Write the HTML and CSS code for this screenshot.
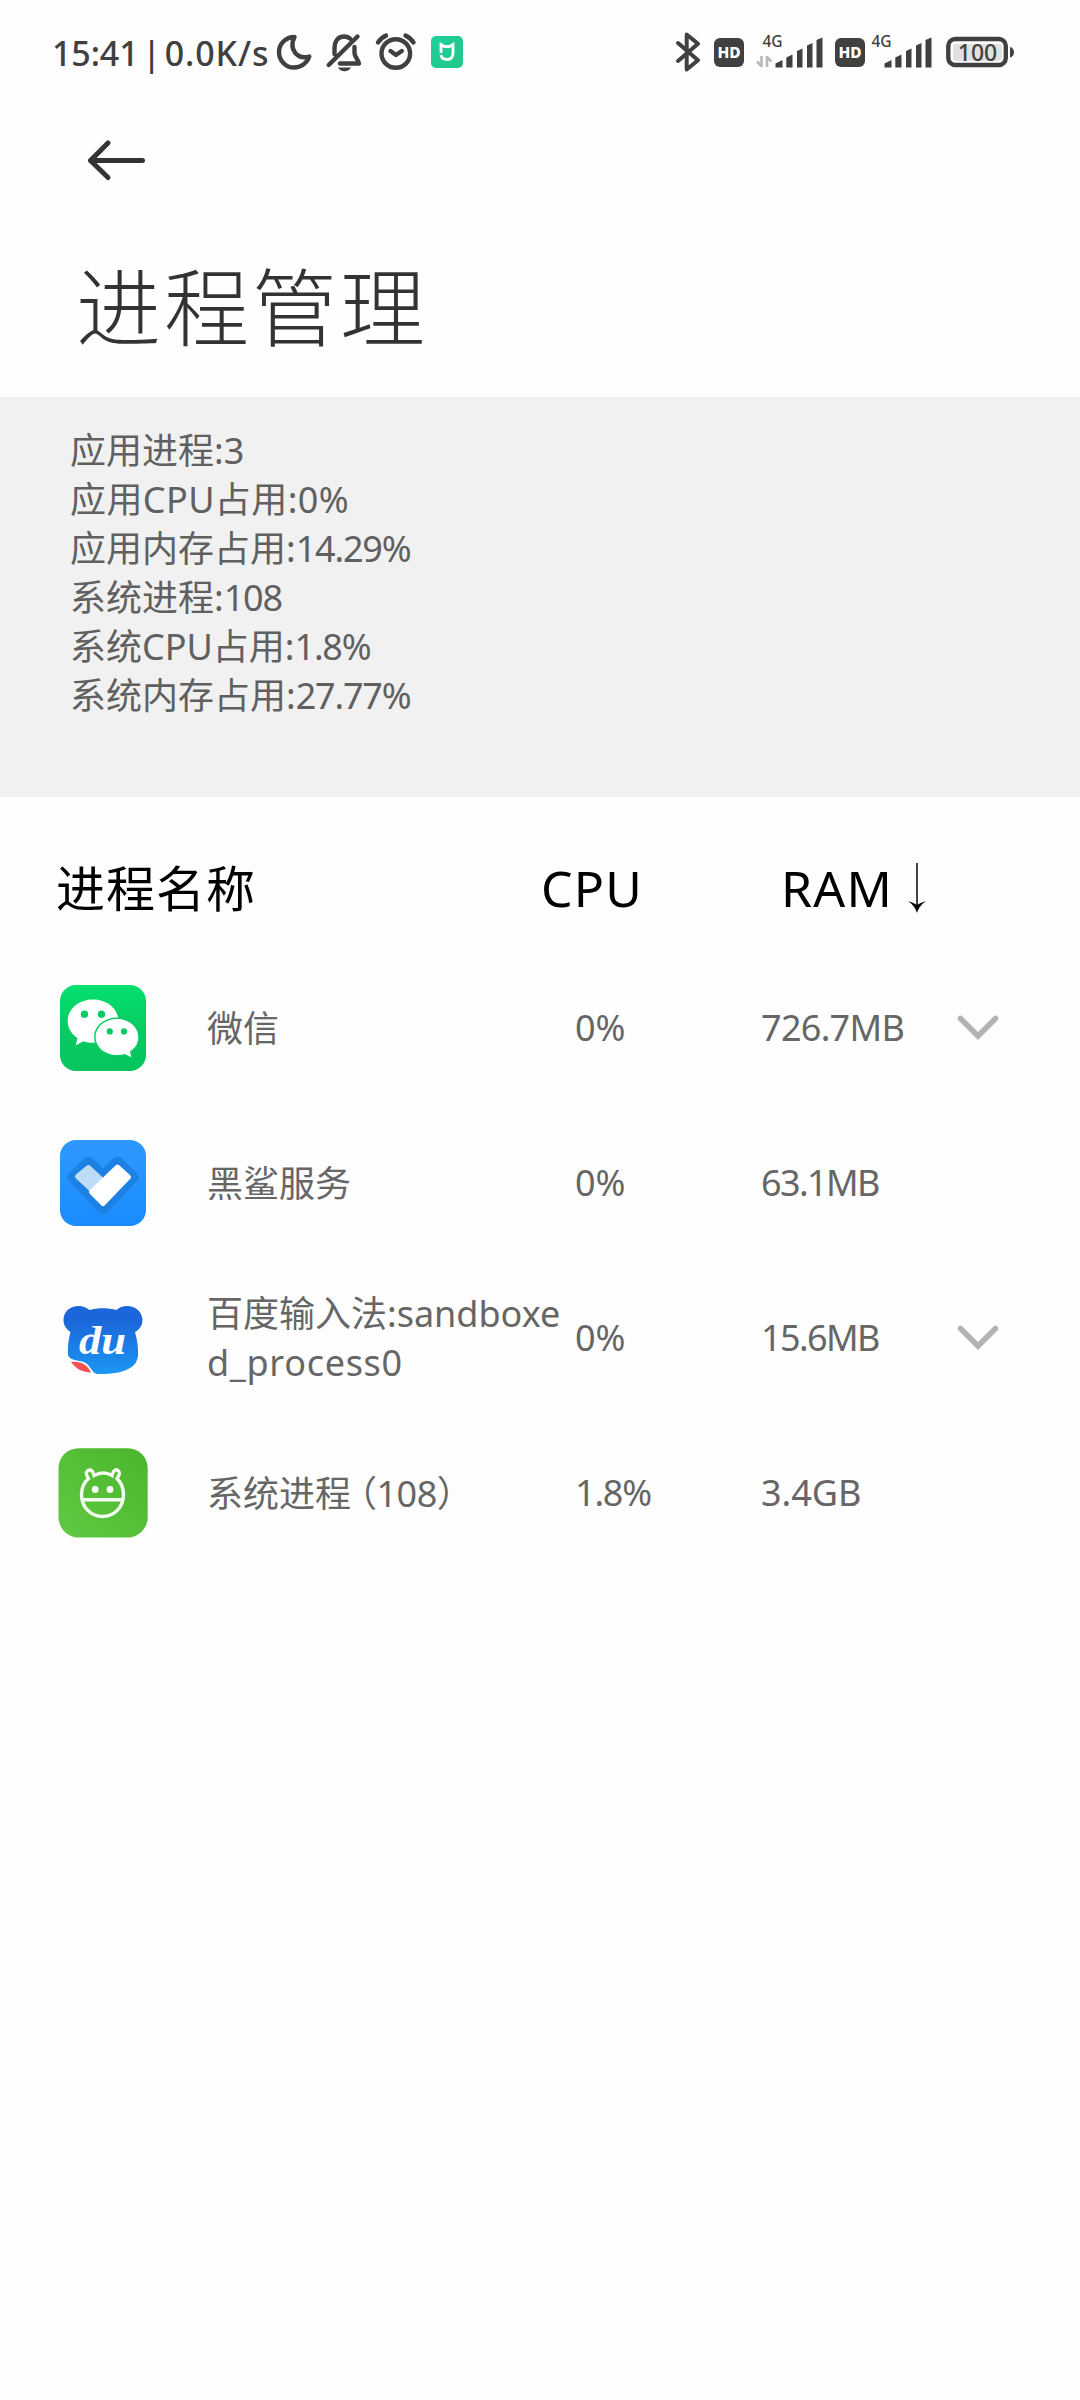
FILE: index.html
```html
<!DOCTYPE html>
<html lang="zh-CN">
<head>
<meta charset="utf-8">
<title>进程管理</title>
<link rel="stylesheet" href="styles.css">
</head>
<body>
<header class="status">
  <div class="status-left">
    <span class="clock">15:41 | <span class="speed">0.0K/s</span></span>
    <svg class="ic" width="40" height="44" viewBox="274 30 40 44"><path d="M294.500 37C288.500 49 297 60 309.300 56.500C307 63 301 67.500 294 67.500C285.500 67.500 279 60.500 279 52C279 44 285.500 37 294.500 37Z"/></svg>
    <svg class="ic" width="40" height="44" viewBox="324 30 40 44"><path d="M328.700 65L357.500 36.500M334.500 54V49C334.500 41 338 36.500 344 36.500C346.500 36.500 348.500 37.300 350 38.500M354.500 47V53C354.500 57 358 59 359 63.500H340"/><path class="solid" d="M338 67.500H351C349.500 70 347.500 71.200 344.500 71.200S339.500 70 338 67.500Z"/></svg>
    <svg class="ic" width="44" height="44" viewBox="374 30 44 44"><circle cx="395.800" cy="53.500" r="14.300"/><path d="M378 42.500C380 39.500 382.500 37 386 35.600M405.500 35.600C409 37 411.500 39.500 413.500 42.500M390.500 51L396 55L401.800 51"/></svg>
    <svg class="mi" width="32" height="32" viewBox="0 0 32 32"><defs><linearGradient id="mg" x1="0" y1="0" x2="1" y2="1"><stop offset="0" stop-color="#1cd19b"/><stop offset="1" stop-color="#22c78a"/></linearGradient></defs><rect width="32" height="32" rx="5" fill="url(#mg)"/><path d="M10 17V8.500L13.500 10.500H18.500L22 8.500V17C22 21.500 20 23.500 16 23.500C12.500 23.500 10.500 22 10 19" fill="none" stroke="#fff" stroke-width="2.800"/></svg>
  </div>
  <div class="status-right">
    <svg class="ic" width="30" height="44" viewBox="673 30 30 44"><path d="M678 43L698 60.300L686.700 69.500V34.500L698 43.700L678 61"/></svg>
    <span class="hd">HD</span>
    <svg class="signal" width="69" height="44" viewBox="756 30 69 44"><text x="762.500" y="46.500">4G</text><path class="faint" d="M761.500 56V67M757 61.500L761.500 66M767 67V56M771.500 61.500L767 57"/><path d="M775.500 67.500V63.500L782.500 60V67.500ZM786.300 67.500V57.500L792.500 54.500V67.500ZM797 67.500V51L802.500 48.500V67.500ZM807 67.500V45.500L812.500 43V67.500ZM816.500 67.500V40L822.500 37.500V67.500Z"/></svg>
    <span class="hd second">HD</span>
    <svg class="signal" width="69" height="44" viewBox="756 30 69 44"><text x="762.500" y="46.500">4G</text><path d="M775.500 67.500V63.500L782.500 60V67.500ZM786.300 67.500V57.500L792.500 54.500V67.500ZM797 67.500V51L802.500 48.500V67.500ZM807 67.500V45.500L812.500 43V67.500ZM816.500 67.500V40L822.500 37.500V67.500Z"/></svg>
    <svg class="battery" width="72" height="44" viewBox="944 30 72 44"><rect x="953" y="44" width="49" height="17" rx="3" fill="#e1e1e1"/><rect x="948.300" y="39" width="57.500" height="26" rx="7" fill="none" stroke="#404040" stroke-width="4.400"/><path d="M1010.500 47.500C1014.500 48.500 1014.500 56 1010.500 57Z" fill="#404040" stroke="#404040"/><text x="977.500" y="60.700" text-anchor="middle">100</text></svg>
  </div>
</header>

<div class="heading">
  <svg class="back" width="64" height="44" viewBox="84 138 64 44"><path d="M142.500 160.500H90.500M108 143L90.500 160.500L108 177.500"/></svg>
  <h1>进程管理</h1>
</div>

<section class="summary">
  <p>应用进程:3</p>
  <p class="wide">应用CPU占用:0%</p>
  <p>应用内存占用:<span class="tight">14.29%</span></p>
  <p>系统进程:<span class="tight">108</span></p>
  <p>系统CPU占用:<span class="tight">1.8%</span></p>
  <p>系统内存占用:<span class="tight">27.77%</span></p>
</section>

<div class="row head">
  <span class="h-name">进程名称</span>
  <span class="h-cpu">CPU</span>
  <span class="h-ram">RAM<svg width="22" height="52" viewBox="0 0 22 52"><path d="M11 1V44" stroke="#444" stroke-width="2"/><path d="M2 39Q8 41 11 43Q14 41 20 39Q13 44 11 51Q9 44 2 39Z"/></svg></span>
</div>

<main class="list">
  <div class="row">
    <svg class="app" viewBox="0 0 90 90"><defs><linearGradient id="wg" x1="0" y1="0" x2="0" y2="1"><stop offset="0" stop-color="#04e06f"/><stop offset=".5" stop-color="#07cc62"/><stop offset="1" stop-color="#07c45e"/></linearGradient></defs><rect x="2" y="2" width="86" height="86" rx="16" fill="url(#wg)"/><path d="M35 16.500C21 16.500 9.700 26 9.700 38C9.700 45 13.500 51 19.500 55L17.800 62.200L25.500 58.200C28.500 59.200 31.500 59.700 35 59.700C49 59.700 60.500 50 60.500 38S49 16.500 35 16.500Z" fill="#fff"/><path d="M59 36C47 36 37.600 44 37.600 54S47 72 59 72C62 72 64.500 71.700 67 71L73.200 74.300L72 68.500C77.500 65 80.300 60 80.300 54C80.300 44 71 36 59 36Z" fill="#fff" stroke="#07cc62" stroke-width="3" paint-order="stroke"/><g fill="#07cc62"><circle cx="26.500" cy="31.200" r="3.700"/><circle cx="43.500" cy="31.200" r="3.700"/><circle cx="51.800" cy="48.400" r="3.100"/><circle cx="66" cy="48.400" r="3.100"/></g></svg>
    <span class="name">微信</span><span>0%</span><span class="ram">726.7MB</span>
    <svg class="chev" viewBox="0 0 42 28"><path d="M3.500 3.500L21 21L38.500 3.500"/></svg>
  </div>
  <div class="row">
    <svg class="app" viewBox="0 0 90 90"><defs><linearGradient id="bg" x1="0" y1="0" x2="0" y2="1"><stop offset="0" stop-color="#2f98ff"/><stop offset="1" stop-color="#198cff"/></linearGradient></defs><rect x="2" y="2" width="86" height="86" rx="16" fill="url(#bg)"/><path d="M30.500 24L45 38.500L59.500 24L75 39.500L45 70.500L15 39.500Z" fill="#1c81e2" stroke="#1c81e2" stroke-width="11" stroke-linejoin="round"/><path d="M30.500 29.500L45 43L35 53L19.500 38.500Z" fill="#bfdcf6" stroke="#bfdcf6" stroke-width="5" stroke-linejoin="round"/><path d="M59.500 29L70.500 39L45 65.500L33.500 54Z" fill="#fff" stroke="#fff" stroke-width="5" stroke-linejoin="round"/></svg>
    <span class="name">黑鲨服务</span><span>0%</span><span class="ram one">63.1MB</span>
  </div>
  <div class="row">
    <svg class="app" viewBox="58 1292 90 90"><defs><linearGradient id="dg" x1="0" y1="0" x2="0" y2="1"><stop offset=".2" stop-color="#1b66da"/><stop offset="1" stop-color="#1c96f3"/></linearGradient></defs><path d="M89.500 1309C98 1306.500 108 1306.500 116.500 1309C122 1303.500 132 1303.500 138 1309C145 1316 143.500 1327 135 1331C137 1338 138.500 1346 138 1354C137.500 1366 126 1373.500 97 1373C90 1371 91 1361 79 1360C75 1359 69 1358 68 1354C67.500 1346 68.500 1338 70.500 1331C62 1326 61.500 1315 67.500 1309C74 1303.500 83 1303.500 89.500 1309Z" fill="url(#dg)"/><path d="M71 1361C80 1359.500 87 1363 91 1371.500C83 1371.500 76 1368 71 1361Z" fill="#ee5055"/><text class="du" x="79" y="1352.500" textLength="47" lengthAdjust="spacingAndGlyphs">du</text></svg>
    <span class="name">百度输入法:sandboxe<span class="spread">d_process0</span></span><span>0%</span><span class="ram one">15.6MB</span>
    <svg class="chev" viewBox="0 0 42 28"><path d="M3.500 3.500L21 21L38.500 3.500"/></svg>
  </div>
  <div class="row">
    <svg class="app" viewBox="58 1448 90 90"><defs><linearGradient id="sg" x1="0" y1="1" x2="1" y2="0"><stop offset="0" stop-color="#61c943"/><stop offset="1" stop-color="#49b52d"/></linearGradient></defs><rect x="58.500" y="1448.200" width="89.200" height="89.200" rx="20" fill="url(#sg)"/><g fill="none" stroke="#f5fff0" stroke-width="3.400"><path d="M94 1475.500C100 1472.500 107 1472.500 112 1475.500C113 1470 116 1469 118 1470.500C121 1473 119 1475 117 1478.500C121 1482.500 123.500 1488 123.500 1494.500C123.500 1507 114.500 1516.500 102.500 1516.500S81.500 1507 81.500 1494.500C81.500 1488 84 1482.500 88.500 1478.500C86.500 1475 85 1473 88 1470.500C91 1469 93 1471 94 1475.500ZM82 1499.800H123"/></g><g fill="#fff"><circle cx="95.200" cy="1489.500" r="3.400"/><circle cx="110" cy="1489.500" r="3.400"/></g></svg>
    <span class="name">系统进程<span class="paren">（108）</span></span><span class="tight">1.8%</span><span>3.4GB</span>
  </div>
</main>
</body>
</html>
```
FILE: styles.css
```css
* { box-sizing: border-box; }
body {
  margin: 0;
  width: 1080px;
  min-height: 2400px;
  background: #fefefe;
  color: #666;
  font-family: "Noto Sans", "Noto Sans CJK SC", sans-serif;
  font-size: 36px;
}
svg { display: block; flex: none; }
h1, p { margin: 0; }

.status {
  display: flex;
  justify-content: space-between;
  height: 104px;
  padding: 0 64px 0 52px;
  color: #404040;
}
.status-left, .status-right { display: flex; align-items: center; }
.clock { width: 222px; padding-top: 1px; font-size: 34px; font-weight: 500; white-space: nowrap; letter-spacing: -0.1px; word-spacing: -5px; }
.speed { letter-spacing: 0.9px; }
.ic { fill: none; stroke: #404040; stroke-width: 4.4; stroke-linecap: round; stroke-linejoin: round; margin-right: 10px; }
.ic .solid { fill: #404040; stroke: none; }
.mi { margin-left: 3px; }
.status-right .ic { margin-right: 11px; stroke-width: 4; }
.hd {
  width: 30px;
  height: 29px;
  border-radius: 6px;
  background: #404040;
  color: #fff;
  font-size: 15.5px;
  font-weight: 800;
  line-height: 29px;
  text-align: center;
}
.signal { margin-left: 12px; fill: #404040; }
.signal text { font-size: 15.5px; font-weight: 500; }
.signal .faint { fill: none; stroke: #b8b8b8; stroke-width: 2.6; }
.hd.second { margin-left: 10px; }
.hd.second + .signal { margin-left: 0; }
.battery { margin-left: 10px; }
.battery text { font-size: 23px; font-weight: 500; fill: #404040; }

.heading { height: 293px; padding: 34px 0 0 76px; }
.back { margin-left: 8px; fill: none; stroke: #333; stroke-width: 5; stroke-linecap: round; stroke-linejoin: round; }
h1 { margin-top: 70px; font-size: 85px; letter-spacing: 3px; font-weight: 300; line-height: 110px; color: #333; }

.summary { height: 400px; padding: 29px 70px; background: #f1f1f1; color: #606060; line-height: 49px; }
.summary .wide { letter-spacing: 0.4px; }
.tight { letter-spacing: -1.2px; }

.row {
  display: grid;
  grid-template-columns: 149px 368px 186px 196px 42px;
  align-items: center;
  height: 155px;
  padding-left: 58px;
}
.row.head {
  grid-template-columns: 485px 240px 1fr;
  height: 153px;
  padding: 28px 0 0 56px;
  color: #000;
  font-size: 50px;
  line-height: 70px;
}
.h-name { font-size: 49px; letter-spacing: 1px; }
.h-cpu, .h-ram { letter-spacing: 1.2px; }
.h-ram { display: flex; align-items: center; }
.h-ram svg { margin-left: 13px; }
.app { width: 90px; height: 90px; }
.name { width: 356px; padding-top: 1px; line-height: 49px; word-break: break-all; }
.spread { letter-spacing: 0.7px; }
.paren { margin-left: 8px; letter-spacing: -0.5px; font-feature-settings: "halt"; }
.ram { letter-spacing: -0.7px; }
.ram.one { letter-spacing: -1.6px; }
.chev { width: 42px; height: 28px; margin-top: 2px; fill: none; stroke: #b3b3b3; stroke-width: 5.6; stroke-linecap: round; }
.du { font: italic bold 41px "Liberation Serif", serif; fill: #fff; }
```
